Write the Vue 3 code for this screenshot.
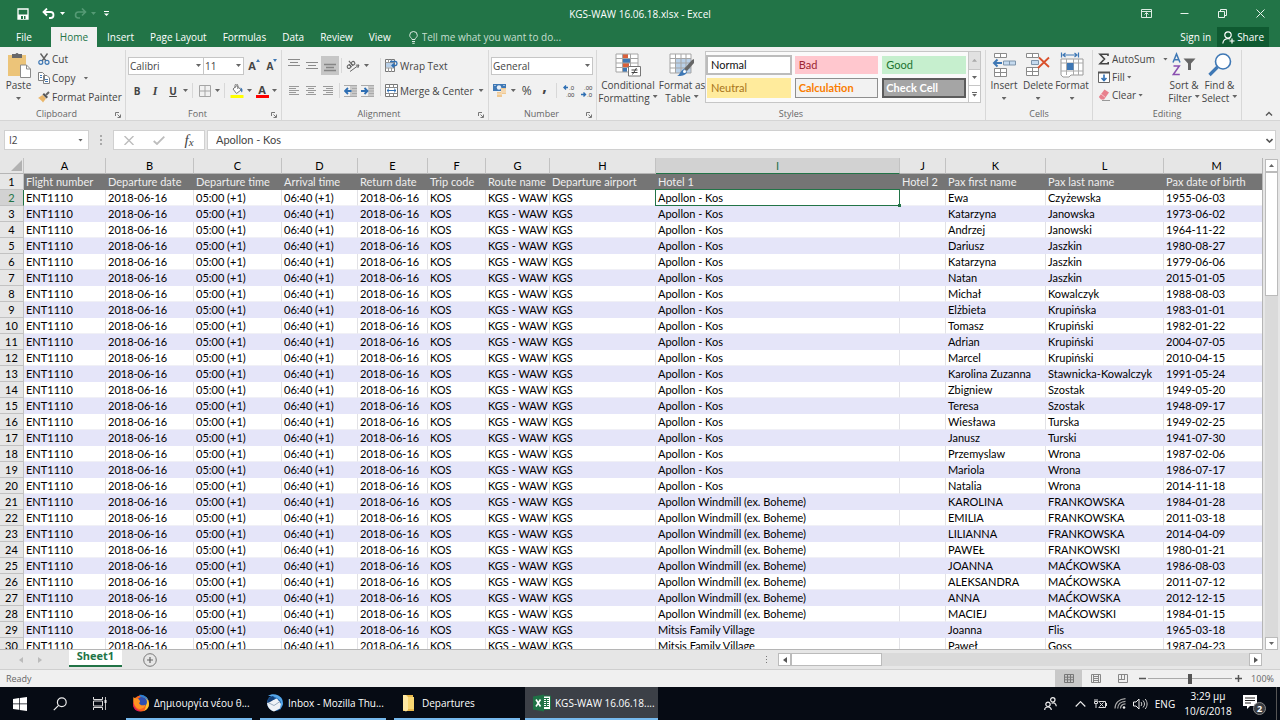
<script setup>
import { ref } from 'vue'

const tabs = ['Insert', 'Page Layout', 'Formulas', 'Data', 'Review', 'View']

const columns = [
  { id: 'A', width: 82, title: 'Flight number' },
  { id: 'B', width: 88, title: 'Departure date' },
  { id: 'C', width: 88, title: 'Departure time' },
  { id: 'D', width: 76, title: 'Arrival time' },
  { id: 'E', width: 70, title: 'Return date' },
  { id: 'F', width: 58, title: 'Trip code' },
  { id: 'G', width: 64, title: 'Route name' },
  { id: 'H', width: 106, title: 'Departure airport' },
  { id: 'I', width: 244, title: 'Hotel 1' },
  { id: 'J', width: 46, title: 'Hotel 2' },
  { id: 'K', width: 100, title: 'Pax first name' },
  { id: 'L', width: 118, title: 'Pax last name' },
  { id: 'M', width: 106, title: 'Pax date of birth' },
]

const KOS = 'Apollon - Kos'
const WINDMILL = 'Apollon Windmill (ex. Boheme)'
const MITSIS = 'Mitsis Family Village'

const passengers = [
  [KOS, 'Ewa', 'Czyżewska', '1955-06-03'],
  [KOS, 'Katarzyna', 'Janowska', '1973-06-02'],
  [KOS, 'Andrzej', 'Janowski', '1964-11-22'],
  [KOS, 'Dariusz', 'Jaszkin', '1980-08-27'],
  [KOS, 'Katarzyna', 'Jaszkin', '1979-06-06'],
  [KOS, 'Natan', 'Jaszkin', '2015-01-05'],
  [KOS, 'Michał', 'Kowalczyk', '1988-08-03'],
  [KOS, 'Elżbieta', 'Krupińska', '1983-01-01'],
  [KOS, 'Tomasz', 'Krupiński', '1982-01-22'],
  [KOS, 'Adrian', 'Krupiński', '2004-07-05'],
  [KOS, 'Marcel', 'Krupiński', '2010-04-15'],
  [KOS, 'Karolina Zuzanna', 'Stawnicka-Kowalczyk', '1991-05-24'],
  [KOS, 'Zbigniew', 'Szostak', '1949-05-20'],
  [KOS, 'Teresa', 'Szostak', '1948-09-17'],
  [KOS, 'Wiesława', 'Turska', '1949-02-25'],
  [KOS, 'Janusz', 'Turski', '1941-07-30'],
  [KOS, 'Przemyslaw', 'Wrona', '1987-02-06'],
  [KOS, 'Mariola', 'Wrona', '1986-07-17'],
  [KOS, 'Natalia', 'Wrona', '2014-11-18'],
  [WINDMILL, 'KAROLINA', 'FRANKOWSKA', '1984-01-28'],
  [WINDMILL, 'EMILIA', 'FRANKOWSKA', '2011-03-18'],
  [WINDMILL, 'LILIANNA', 'FRANKOWSKA', '2014-04-09'],
  [WINDMILL, 'PAWEŁ', 'FRANKOWSKI', '1980-01-21'],
  [WINDMILL, 'JOANNA', 'MAĆKOWSKA', '1986-08-03'],
  [WINDMILL, 'ALEKSANDRA', 'MAĆKOWSKA', '2011-07-12'],
  [WINDMILL, 'ANNA', 'MAĆKOWSKA', '2012-12-15'],
  [WINDMILL, 'MACIEJ', 'MAĆKOWSKI', '1984-01-15'],
  [MITSIS, 'Joanna', 'Flis', '1965-03-18'],
  [MITSIS, 'Paweł', 'Goss', '1987-04-23'],
]

const rows = passengers.map(([hotel, first, last, born]) => [
  'ENT1110', '2018-06-16', '05:00 (+1)', '06:40 (+1)', '2018-06-16',
  'KOS', 'KGS - WAW', 'KGS', hotel, '', first, last, born,
])

const nameBox = ref('I2')
const formula = ref(KOS)
const zoom = ref(50)
</script>

<template>
  <div class="screen">
    <header class="top">
      <div class="titlebar">
        <div class="quick">
          <button aria-label="Save"><svg width="12" height="12" viewBox="0 0 12 12"><path d="M1 1h10v10H1z" fill="none" stroke="#fff" stroke-width="1.3" /><path d="M1 6.500h10V11H1z" fill="#fff" /><path d="M4 8h2v3H4zM7 8h1.500v3H7z" fill="#227447" /></svg></button>
          <button class="undo" aria-label="Undo"><svg width="13" height="11" viewBox="0 0 13 11"><path d="M2 4h6.500a3 3 0 0 1 0 6H7" fill="none" stroke="#fff" stroke-width="1.800" /><path d="M5 .5L1.500 4 5 7.500" fill="none" stroke="#fff" stroke-width="1.800" /></svg></button>
          <i class="tri light"></i>
          <button class="redo" aria-label="Redo"><svg width="13" height="11" viewBox="0 0 13 11"><path d="M11 4H4.500a3 3 0 0 0 0 6H6M8 .5L11.500 4 8 7.500" fill="none" stroke="#559a75" stroke-width="1.600" /></svg></button>
          <i class="tri faint"></i>
          <button class="custom" aria-label="Customize Quick Access Toolbar"><svg width="5" height="6" viewBox="0 0 5 6"><path d="M0 .5h5" stroke="#fff" /><path d="M0 2.500h5L2.500 5z" fill="#fff" /></svg></button>
        </div>
        <h1>KGS-WAW 16.06.18.xlsx - Excel</h1>
        <div class="winbtns">
          <button aria-label="Ribbon Display Options"><svg width="11" height="9" viewBox="0 0 11 9"><path d="M.5.5h10v8H.5zM.5 2.500h10M5.500 8V4M3.500 5.500l2-2 2 2" fill="none" stroke="#dcebe2" /></svg></button>
          <button aria-label="Minimize"><svg width="9" height="9" viewBox="0 0 9 9"><path d="M.5 4.500h8" stroke="#e8f2ec" /></svg></button>
          <button aria-label="Restore"><svg width="9" height="9" viewBox="0 0 9 9"><path d="M.5 2.500h6v6h-6zM2.500 2.500v-2h6v6h-2" fill="none" stroke="#e8f2ec" /></svg></button>
          <button aria-label="Close"><svg width="9" height="9" viewBox="0 0 9 9"><path d="M.5.5l8 8M8.500.5l-8 8" stroke="#e8f2ec" /></svg></button>
        </div>
      </div>
      <nav class="tabs">
        <button class="file">File</button>
        <button class="active">Home</button>
        <button v-for="t in tabs" :key="t">{{ t }}</button>
        <label class="tell">
          <svg width="9" height="13" viewBox="0 0 9 13"><path d="M3 8.500C3 7 .7 6.500.7 4.300a3.800 3.800 0 0 1 7.600 0C8.300 6.500 6 7 6 8.500zM3 10.500h3M3.300 12.300h2.400" fill="none" stroke="#dcebe2" /></svg>
          <input type="text" aria-label="Tell me" placeholder="Tell me what you want to do..." />
        </label>
        <button class="signin">Sign in</button>
        <button class="share"><svg width="13" height="13" viewBox="0 0 13 13"><circle cx="6" cy="4" r="3.200" fill="none" stroke="#fff" stroke-width="1.200" /><path d="M.8 12.500c.4-3 2.200-4.800 5.200-5 1 0 1.600.2 2.200.5M10 7.500v5M7.500 10h5" fill="none" stroke="#fff" stroke-width="1.200" /></svg>Share</button>
      </nav>
    </header>

    <section class="ribbon" aria-label="Ribbon">
      <div class="group clipboard">
        <div class="body">
          <button class="big paste">
            <svg width="24" height="26" viewBox="0 0 24 26"><path d="M1 3h18v21H1z" fill="#ecc479" /><path d="M5 2h3.500a1.600 1.600 0 0 1 3 0H15v4H5z" fill="#68686a" /><path d="M13.500 13h6l4 4v8.500h-10z" fill="#fff" stroke="#8b8b8b" /><path d="M19.500 13v4h4" fill="none" stroke="#8b8b8b" /></svg>
            <span>Paste</span><i class="tri"></i>
          </button>
          <div class="stack">
            <button class="small"><svg width="12" height="12" viewBox="0 0 12 12"><path d="M2.500.5L8 8M9.500.5L4 8" stroke="#606060" stroke-width="1.400" /><circle cx="2.800" cy="9.300" r="2" fill="none" stroke="#3f78b5" stroke-width="1.200" /><circle cx="9" cy="9.300" r="2" fill="none" stroke="#3f78b5" stroke-width="1.200" /></svg>Cut</button>
            <button class="small"><svg width="12" height="12" viewBox="0 0 12 12"><path d="M.5.5h4l2 2v6h-6zM5.500 3.500h3.500l2.500 2.500v5.500h-6z" fill="#fff" stroke="#808080" /><path d="M2 3.500h2M2 5.500h2M7 7.500h3M7 9.500h3" stroke="#3f78b5" /></svg>Copy<i class="tri gap"></i></button>
            <button class="small"><svg width="12" height="12" viewBox="0 0 12 12"><path d="M4.500 4L8 7.500 5 11.500C3.500 9.500 2 8 0 7z" fill="#eab669" /><path d="M4.500 3.500L8.500 7.500 10 6 6 2z" fill="#555" /><path d="M8 4l3-3" stroke="#666" stroke-width="2" /></svg>Format Painter</button>
          </div>
        </div>
        <footer>Clipboard<svg class="launch" viewBox="0 0 6 6"><path d="M.5 4V.5H4M2.500 2.500L5 5M5.500 2.500v3h-3" fill="none" stroke="#777" /></svg></footer>
      </div>

      <div class="group font">
        <div class="body rows">
          <div class="line">
            <span class="combo face"><select aria-label="Font"><option>Calibri</option></select><i class="tri"></i></span>
            <span class="combo size"><select aria-label="Font size"><option>11</option></select><i class="tri"></i></span>
            <button class="tool grow" aria-label="Increase Font Size"><b>A</b><svg width="4" height="3" viewBox="0 0 4 3"><path d="M2 0l2 3H0z" fill="#3f78b5" /></svg></button>
            <button class="tool grow less" aria-label="Decrease Font Size"><b>A</b><svg width="4" height="3" viewBox="0 0 4 3"><path d="M0 0h4L2 3z" fill="#3f78b5" /></svg></button>
          </div>
          <div class="line">
            <button class="tool"><b>B</b></button>
            <button class="tool it"><b>I</b></button>
            <button class="tool un"><b>U</b></button>
            <i class="tri"></i><i class="vr"></i>
            <button class="tool" aria-label="Borders"><svg width="12" height="12" viewBox="0 0 12 12"><path d="M.5.5h11v11H.5zM6 .5v11M.5 6h11" fill="none" stroke="#a5a5a5" /></svg></button>
            <i class="tri"></i><i class="vr"></i>
            <button class="tool" aria-label="Fill Color"><svg width="14" height="14" viewBox="0 0 14 14"><path d="M3 5l4-3.500L11 6 6.500 9.500z" fill="#fff" stroke="#777" /><path d="M5 4V1.500a1.400 1.400 0 0 1 2.800 0V5" fill="none" stroke="#777" /><path d="M10.500 3.500c2 .5 2.500 2.500 1.500 5-1-.5-1.500-2-1.500-5z" fill="#3f78b5" /><path d="M.5 11h13v3H.5z" fill="#ff0" /></svg></button>
            <i class="tri"></i>
            <button class="tool color" aria-label="Font Color"><b>A</b></button>
            <i class="tri"></i>
          </div>
        </div>
        <footer>Font<svg class="launch" viewBox="0 0 6 6"><path d="M.5 4V.5H4M2.500 2.500L5 5M5.500 2.500v3h-3" fill="none" stroke="#777" /></svg></footer>
      </div>

      <div class="group align">
        <div class="body">
          <div class="rows">
            <div class="line">
              <button class="tool" aria-label="Top Align"><svg class="lift" width="12" height="12" viewBox="0 0 12 12"><path d="M0 1.500h12M2 4.500h8M0 7.500h12" stroke="#8a8a8a" /></svg></button>
              <button class="tool" aria-label="Middle Align"><svg width="12" height="12" viewBox="0 0 12 12"><path d="M0 2.500h12M2 5.500h8M0 8.500h12" stroke="#8a8a8a" /></svg></button>
              <button class="tool pressed" aria-label="Bottom Align"><svg width="12" height="12" viewBox="0 0 12 12"><path d="M0 4.500h12M2 7.500h8M0 10.500h12" stroke="#858585" stroke-width="1.500" /></svg></button>
              <i class="vr"></i>
              <button class="tool" aria-label="Orientation"><svg width="14" height="13" viewBox="0 0 14 13"><path d="M4 12.500l9-6.500M13 6l-3.200.2M13 6l-1.200 3" fill="none" stroke="#666" /><g transform="rotate(-40 5 6)" fill="none" stroke="#666" stroke-width="1.100"><circle cx="2.300" cy="6" r="1.700" /><path d="M4.200 4v4M6 1.500V8" /><circle cx="7.800" cy="6" r="1.700" /></g></svg></button>
              <i class="tri"></i>
            </div>
            <div class="line">
              <button class="tool" aria-label="Align Left"><svg width="10" height="9" viewBox="0 0 10 9"><path d="M0 .5h10M0 2.500h7M0 4.500h10M0 6.500h7M0 8.500h10" stroke="#9a9a9a" /></svg></button>
              <button class="tool" aria-label="Center"><svg width="10" height="9" viewBox="0 0 10 9"><path d="M0 .5h10M2 2.500h6M0 4.500h10M2 6.500h6M0 8.500h10" stroke="#9a9a9a" /></svg></button>
              <button class="tool" aria-label="Align Right"><svg width="10" height="9" viewBox="0 0 10 9"><path d="M0 .5h10M3 2.500h7M0 4.500h10M3 6.500h7M0 8.500h10" stroke="#9a9a9a" /></svg></button>
              <i class="vr"></i>
              <button class="tool" aria-label="Decrease Indent"><svg width="13" height="12" viewBox="0 0 13 12"><path d="M6 .5h7v11H6z" fill="#c9c9c9" /><path d="M0 .5h13M0 11.500h13M8 3.500h5M8 6h5M8 8.500h5" stroke="#aaa" /><path d="M7.500 6H1.500M4 3L1 6l3 3" fill="none" stroke="#2f6fb3" stroke-width="1.800" /></svg></button>
              <button class="tool" aria-label="Increase Indent"><svg width="13" height="12" viewBox="0 0 13 12"><path d="M7 .5h6v11H7z" fill="#c9c9c9" /><path d="M0 .5h13M0 11.500h13M8 3.500h5M8 6h5M8 8.500h5" stroke="#aaa" /><path d="M0 6h6M3.500 3l3 3-3 3" fill="none" stroke="#2f6fb3" stroke-width="1.800" /></svg></button>
            </div>
          </div>
          <i class="vr tall"></i>
          <div class="rows">
            <button class="small"><svg width="13" height="13" viewBox="0 0 13 13"><path d="M.5.5h9v12h-9z" fill="#fff" stroke="#777" /><path d="M1 4h8v4.500H1z" fill="#b9d0e8" /><path d="M3.500.5v3M6.500.5v3M3.500 9v4M6.500 9v4M.5 3.500h9M.5 9h9" stroke="#999" /><path d="M5 2.500h5.500c2 0 2 4 0 4H7M9 4.500l-2 2 2 2" fill="none" stroke="#2f6fb3" stroke-width="1.300" /></svg>Wrap Text</button>
            <button class="small"><svg width="13" height="13" viewBox="0 0 13 13"><path d="M.5.5h12v12H.5z" fill="#fff" stroke="#777" /><path d="M.5 3.500h12M.5 9.500h12M4.500.5v3M8.500.5v3M4.500 9.500v3M8.500 9.500v3" stroke="#888" /><path d="M2 6.500h9M4 4.700L2 6.500l2 1.800M9 4.700l2 1.800-2 1.800" fill="none" stroke="#2f6fb3" /></svg>Merge &amp; Center<i class="tri near"></i></button>
          </div>
        </div>
        <footer>Alignment<svg class="launch" viewBox="0 0 6 6"><path d="M.5 4V.5H4M2.500 2.500L5 5M5.500 2.500v3h-3" fill="none" stroke="#777" /></svg></footer>
      </div>

      <div class="group number">
        <div class="body rows">
          <div class="line"><span class="combo format"><select aria-label="Number Format"><option>General</option></select><i class="tri"></i></span></div>
          <div class="line">
            <button class="tool" aria-label="Accounting Number Format"><svg width="13" height="13" viewBox="0 0 13 13"><path d="M0 0h13v7H0z" fill="#3f78b5" /><circle cx="6" cy="3.500" r="2.200" fill="#e9f0f8" /><path d="M1.500 1.500h1M10.500 1.500h1" stroke="#fff" /><path d="M8 4h5v6H8zM4 8h5v5H4z" fill="#f0c890" /><path d="M8 6h5M8 8h5M4 10h5" stroke="#fff" stroke-width=".6" /></svg></button>
            <i class="tri"></i>
            <button class="tool sign">%</button>
            <button class="tool comma">,</button>
            <i class="vr"></i>
            <button class="tool" aria-label="Increase Decimal"><svg class="dec" width="12" height="14" viewBox="0 0 12 14"><text x="6" y="6">.0</text><text x="3" y="13">.00</text><path d="M5 3.500H1M3 1.500l-2 2 2 2" fill="none" stroke="#2f6fb3" stroke-width="1.400" /></svg></button>
            <button class="tool" aria-label="Decrease Decimal"><svg class="dec" width="12" height="14" viewBox="0 0 12 14"><text x="3" y="6">.00</text><text x="6" y="13">.0</text><path d="M0 10.500h4M2.500 8.500l2 2-2 2" fill="none" stroke="#2f6fb3" stroke-width="1.400" /></svg></button>
          </div>
        </div>
        <footer>Number<svg class="launch" viewBox="0 0 6 6"><path d="M.5 4V.5H4M2.500 2.500L5 5M5.500 2.500v3h-3" fill="none" stroke="#777" /></svg></footer>
      </div>

      <div class="group styles">
        <div class="body">
          <button class="big cond">
            <svg width="26" height="24" viewBox="0 0 26 24"><path d="M1 1h22v18H1z" fill="#fff" /><path d="M8 1h5v4H8zM8 10h6v4H8z" fill="#d9603b" /><path d="M8 5h8v5H8zM8 14h4v5H8z" fill="#3f78b5" /><path d="M1 1h22v18H1zM1 5.500h22M1 10h22M1 14.500h22M7.500 1v18M15.500 1v18" fill="none" stroke="#a5a5a5" /><path d="M13.500 13.500h12v9.500h-12z" fill="#fff" stroke="#777" /><path d="M16.500 17h6M16.500 19.500h6M21.500 15l-4 6.500" stroke="#444" /></svg>
            <span>Conditional<br />Formatting<i class="tri"></i></span>
          </button>
          <button class="big fat">
            <svg width="26" height="24" viewBox="0 0 26 24"><path d="M1 1h21v19H1z" fill="#fff" /><path d="M6.500 5.500H22V20H6.500z" fill="#b9d0e8" /><path d="M1 1h21v19H1zM1 5.500h21M1 10h21M1 15h21M6.500 1v19M12 1v19M17 1v19" fill="none" stroke="#a5a5a5" /><path d="M25 6v4l-7 8-3-2 8-9z" fill="#666" /><path d="M15 16l3 3c-1 3-5 4.500-10 4 3-1 3-5 7-7z" fill="#3f78b5" /><circle cx="15.500" cy="18.500" r="1.500" fill="#fff" /></svg>
            <span>Format as<br />Table<i class="tri"></i></span>
          </button>
          <div class="gallery">
            <div class="swatches">
              <button class="normal">Normal</button><button class="bad">Bad</button><button class="good">Good</button>
              <button class="neutral">Neutral</button><button class="calc">Calculation</button><button class="check">Check Cell</button>
            </div>
            <div class="spin">
              <button class="off" aria-label="Previous styles"><i class="tri up"></i></button>
              <button aria-label="Next styles"><i class="tri"></i></button>
              <button class="more" aria-label="More styles"><i class="tri"></i></button>
            </div>
          </div>
        </div>
        <footer>Styles</footer>
      </div>

      <div class="group cells">
        <div class="body">
          <button class="big"><svg width="24" height="24" viewBox="0 0 24 24"><path d="M2.500.5h12v4h-12zM8.500.5v4M2.500 15.500h12v8h-12zM2.500 19.500h12M8.500 15.500v8" fill="#fff" stroke="#8a8a8a" /><path d="M11.500 8h12v4h-12zM17.500 8v4" fill="#c5daef" stroke="#7f95ab" /><path d="M10 10H2M5.500 6.500L2 10l3.500 3.500" fill="none" stroke="#3f78b5" stroke-width="2" /></svg><span>Insert</span><i class="tri"></i></button>
          <button class="big"><svg width="24" height="24" viewBox="0 0 24 24"><path d="M.5.5h12v4H.5zM6.500.5v4M.5 14.500h12v8H.5zM.5 18.500h12M6.500 14.500v8" fill="#fff" stroke="#8a8a8a" /><path d="M5.500 7.500h7v4h-7z" fill="#c5daef" stroke="#7f95ab" /><path d="M13 4.500L23 14M23 4.500L12 15" stroke="#d9502b" stroke-width="1.800" /></svg><span>Delete</span><i class="tri"></i></button>
          <button class="big"><svg width="24" height="25" viewBox="0 0 24 25"><path d="M1.500 0v5M18.500 0v5M3 2.500h14M5.500.5l-2.500 2 2.500 2M14.500.5l2.500 2-2.500 2" fill="none" stroke="#3f78b5" stroke-width="1.200" /><path d="M1 6.500h22v16H11l-2 2H3l-2-2z" fill="#fff" stroke="#9a9a9a" /><path d="M1 10.500h22M1 18.500h22M6.500 6.500v16M13.500 6.500v16M18.500 6.500v16" stroke="#aaa" /><path d="M7 10.500h6.500v7H7z" fill="#3f78b5" /></svg><span>Format</span><i class="tri"></i></button>
        </div>
        <footer>Cells</footer>
      </div>

      <div class="group editing">
        <div class="body">
          <div class="stack">
            <button class="small"><svg width="12" height="12" viewBox="0 0 12 12"><path d="M10 3V1.200H2L6.500 6 2 10.800h8.200V9" fill="none" stroke="#444" stroke-width="1.600" /></svg>AutoSum<i class="tri gap"></i></button>
            <button class="small"><svg width="12" height="12" viewBox="0 0 12 12"><path d="M.5 1.500h11v10H.5z" fill="#fff" stroke="#666" /><path d="M0 1.500h12" stroke="#555" stroke-width="2" /><path d="M6 3.500V9M3.500 7L6 9.500 8.500 7" fill="none" stroke="#2f6fb3" stroke-width="1.600" /></svg>Fill<i class="tri"></i></button>
            <button class="small"><svg width="12" height="12" viewBox="0 0 12 12"><path d="M6.500.5l4.500 3L6 10.500H3L.8 8z" fill="#e8808d" /><path d="M3 5l4.500 3.500" stroke="#f6c3ca" /><path d="M4 11.500h8" stroke="#999" /></svg>Clear<i class="tri"></i></button>
          </div>
          <button class="big sort"><svg width="24" height="24" viewBox="0 0 24 24"><path d="M1 9.500L4.500 1 8 9.500M2.200 6.800h4.600" fill="none" stroke="#3f78b5" stroke-width="1.500" /><path d="M1.500 13h5.800l-6 8.500h6.500" fill="none" stroke="#8a4fb0" stroke-width="1.500" /><path d="M11.500 5.500h12l-4.500 5V17h-3v-6.500z" fill="#666" /></svg><span>Sort &amp;<br />Filter<i class="tri"></i></span></button>
          <button class="big find"><svg width="24" height="24" viewBox="0 0 24 24"><path d="M9.500 14L1.500 22" stroke="#3f78b5" stroke-width="3.200" /><circle cx="15" cy="8.500" r="7.500" fill="#fff" stroke="#3f78b5" stroke-width="1.600" /></svg><span>Find &amp;<br />Select<i class="tri"></i></span></button>
        </div>
        <footer>Editing</footer>
      </div>
      <button class="collapse" aria-label="Collapse the Ribbon"><svg width="8" height="5" viewBox="0 0 8 5"><path d="M1 4.500l3-3 3 3" fill="none" stroke="#555" stroke-width="1.400" /></svg></button>
    </section>

    <section class="formulabar">
      <span class="namebox"><input v-model="nameBox" type="text" aria-label="Name Box" /><i class="tri"></i></span>
      <svg class="dots" width="2" height="10" viewBox="0 0 2 10"><path d="M0 0h2v2H0zM0 4h2v2H0zM0 8h2v2H0z" fill="#aaa" /></svg>
      <div class="fx">
        <button aria-label="Cancel"><svg width="10" height="9" viewBox="0 0 10 9"><path d="M.5 0l9 9M9.500 0l-9 9" stroke="#bdbdbd" stroke-width="1.400" /></svg></button>
        <button aria-label="Enter"><svg width="12" height="9" viewBox="0 0 12 9"><path d="M.7 5l3.300 3L11.300.7" fill="none" stroke="#bdbdbd" stroke-width="1.800" /></svg></button>
        <button class="fn" aria-label="Insert Function">f<small>x</small></button>
      </div>
      <span class="formula"><input v-model="formula" type="text" aria-label="Formula" /><svg width="7" height="5" viewBox="0 0 7 5"><path d="M.5 1l3 3 3-3" fill="none" stroke="#555" stroke-width="1.600" /></svg></span>
    </section>

    <main class="sheet">
      <div class="viewport">
        <table>
          <colgroup>
            <col class="rowhead" />
            <col v-for="c in columns" :key="c.id" :style="{ width: c.width + 'px' }" />
          </colgroup>
          <thead>
            <tr>
              <th class="corner"><svg width="11" height="11" viewBox="0 0 11 11"><path d="M11 0v11H0z" fill="#b2b2b2" /></svg></th>
              <th v-for="c in columns" :key="c.id" :class="{ on: c.id === 'I' }">{{ c.id }}</th>
            </tr>
          </thead>
          <tbody>
            <tr class="titles">
              <th>1</th>
              <td v-for="c in columns" :key="c.id">{{ c.title }}</td>
            </tr>
            <tr v-for="(row, r) in rows" :key="r" :class="{ odd: r % 2 === 1 }">
              <th :class="{ on: r === 0 }">{{ r + 2 }}</th>
              <td v-for="(cell, c) in row" :key="c" :class="{ picked: r === 0 && c === 8 }">{{ cell }}</td>
            </tr>
          </tbody>
        </table>
      </div>
      <div class="vscroll">
        <button aria-label="Scroll up"><i class="tri up"></i></button>
        <div class="vthumb"></div>
        <div class="track"></div>
        <button aria-label="Scroll down"><i class="tri"></i></button>
      </div>
    </main>

    <div class="sheetbar">
      <button class="nav" aria-label="Previous sheet"><svg width="4" height="6" viewBox="0 0 4 6"><path d="M4 0v6L0 3z" fill="#bbb" /></svg></button>
      <button class="nav" aria-label="Next sheet"><svg width="4" height="6" viewBox="0 0 4 6"><path d="M0 0v6l4-3z" fill="#bbb" /></svg></button>
      <button class="sheettab">Sheet1</button>
      <button class="add" aria-label="New sheet"><svg width="14" height="14" viewBox="0 0 14 14"><circle cx="7" cy="7" r="6.300" fill="none" stroke="#777" /><path d="M7 4v6M4 7h6" stroke="#666" stroke-width="1.200" /></svg></button>
      <svg class="grip" width="2" height="8" viewBox="0 0 2 8"><path d="M0 0h1v1H0zM0 3h1v1H0zM0 6h1v1H0z" fill="#777" /></svg>
      <div class="hscroll">
        <button aria-label="Scroll left"><svg width="4" height="6" viewBox="0 0 4 6"><path d="M4 0v6L0 3z" fill="#555" /></svg></button>
        <div class="hthumb"></div>
        <div class="track"></div>
        <button aria-label="Scroll right"><svg width="4" height="6" viewBox="0 0 4 6"><path d="M0 0v6l4-3z" fill="#555" /></svg></button>
      </div>
    </div>

    <footer class="status">
      <span class="ready">Ready</span>
      <button class="view on" aria-label="Normal view"><svg width="10" height="9" viewBox="0 0 10 9"><path d="M.5.5h9v8h-9zM.5 3.200h9M.5 5.800h9M3.500.5v8M6.500.5v8" fill="none" stroke="#777" /></svg></button>
      <button class="view" aria-label="Page Layout view"><svg width="10" height="9" viewBox="0 0 10 9"><path d="M.5.5h9v8h-9zM3 2.500h4M3 4.500h4M3 6.500h4M2.500.5v8M7.500.5v8" fill="none" stroke="#888" /></svg></button>
      <button class="view" aria-label="Page Break Preview"><svg width="10" height="9" viewBox="0 0 10 9"><path d="M.5.5h9v8h-9zM3.500.5v5M6.500.5v5M0 5.500h7" fill="none" stroke="#888" /></svg></button>
      <button class="step" aria-label="Zoom out"><svg width="7" height="7" viewBox="0 0 7 7"><path d="M0 3.500h7" stroke="#555" stroke-width="1.500" /></svg></button>
      <input v-model="zoom" class="zoom" type="range" min="0" max="100" aria-label="Zoom" />
      <button class="step" aria-label="Zoom in"><svg width="7" height="7" viewBox="0 0 7 7"><path d="M0 3.500h7M3.500 0v7" stroke="#555" stroke-width="1.500" /></svg></button>
      <span class="pct">100%</span>
    </footer>

    <div class="taskbar">
      <button class="sys" aria-label="Start"><svg width="14" height="14" viewBox="0 0 14 14"><path d="M0 2l6-.9v5.500H0zM6.700 1L14 0v6.600H6.700zM0 7.300h6v5.500L0 12zM6.700 7.300H14V14l-7.300-1z" fill="#fff" /></svg></button>
      <button class="sys" aria-label="Search"><svg width="14" height="14" viewBox="0 0 14 14"><circle cx="8.800" cy="5.200" r="4.400" fill="none" stroke="#eee" stroke-width="1.200" /><path d="M5.600 8.400L.8 13.200" stroke="#eee" stroke-width="1.200" /></svg></button>
      <button class="sys" aria-label="Task View"><svg width="14" height="13" viewBox="0 0 14 13"><path d="M.5 0v2.500h9V0M.5 13v-2.500h9V13M.5 4h9v5h-9z" fill="none" stroke="#ddd" /><path d="M12.500 0v13" stroke="#bbb" /><path d="M11.500 3h2v3h-2z" fill="#eee" /></svg></button>
      <button class="app firefox">
        <svg width="18" height="18" viewBox="0 0 18 18"><circle cx="9" cy="9.500" r="8" fill="#f7641e" /><path d="M9 1.500a8 8 0 0 1 8 8c0 4-2 6-5 7.500 3-4 2.500-9-3-15.500z" fill="#ffc42e" /><circle cx="10" cy="8" r="5" fill="#2d4fb0" /><path d="M7 1c4-1.500 9 2 9.500 6-1.500-2-3-3-5-3.500C9 3 8 2.500 7 1z" fill="#2b7fd6" /><path d="M1.500 3c1 1 2.500 1.500 4 1.500C8 6 9 8 7 9c1 2.500 4 3 6.500 1.500C13 14.500 8 16 5 14 2.500 12 .5 7 1.500 3z" fill="#ff9322" /><path d="M1.200 8c.5 5 3.800 8.500 8.300 9C5 18.500 0 15 1.200 8z" fill="#e31a57" /></svg>
        <span>Δημιουργία νέου θ...</span>
      </button>
      <button class="app">
        <svg width="18" height="18" viewBox="0 0 18 18"><circle cx="9" cy="9" r="8" fill="#2266ad" /><path d="M2 2c4-3 11-2 14 3l1 5-3 6 1-8C13 4 8 2 2 2z" fill="#55a6e8" /><path d="M1 8l10-3.500 4 5.500-1 4.500-6 3C4 16.500 1 13 1 8z" fill="#eef2f6" /><path d="M1 8l7 3.500 6-4" fill="none" stroke="#9badbf" /><path d="M7 2c-3 1-6 4-6 7l3-1 5-3z" fill="#123f78" /></svg>
        <span>Inbox - Mozilla Thu...</span>
      </button>
      <button class="app">
        <svg width="18" height="18" viewBox="0 0 18 18"><path d="M3 1h10v13h1v3H3z" fill="#e8b84b" /><path d="M3 1h3l2 2v13l-2 1.500L3 16z" fill="#ffe9a2" /><path d="M8 3h6v12H8z" fill="#f9d772" /></svg>
        <span>Departures</span>
      </button>
      <button class="app current">
        <svg width="18" height="18" viewBox="0 0 18 18"><path d="M9 2h8.500v13.500H9z" fill="#fff" stroke="#1f7246" /><path d="M11 4.500h5M11 6.500h5M11 8.500h5M11 10.500h5M11 12.500h5M13.500 4v9" stroke="#1f7246" /><path d="M0 2.500L11 .5v17L0 15.500z" fill="#1f7246" /><path d="M3 5.500l4.500 7M7.500 5.500L3 12.500" stroke="#fff" stroke-width="1.600" /></svg>
        <span>KGS-WAW 16.06.18....</span>
      </button>
      <div class="tray">
        <button class="people" aria-label="People"><svg width="13" height="14" viewBox="0 0 13 14"><circle cx="8.800" cy="2.800" r="2.200" fill="none" stroke="#eee" stroke-width="1.200" /><circle cx="4" cy="7.300" r="2.200" fill="none" stroke="#eee" stroke-width="1.200" /><path d="M.7 13c0-4 6.600-4 6.600 0M7.500 6.300c2.500-1.200 4.500 0 4.800 3" fill="none" stroke="#eee" stroke-width="1.200" /></svg></button>
        <button aria-label="Show hidden icons"><svg width="11" height="6" viewBox="0 0 11 6"><path d="M.7 5.500l4.800-4.800 4.800 4.800" fill="none" stroke="#eee" stroke-width="1.200" /></svg></button>
        <button aria-label="Battery"><svg width="13" height="10" viewBox="0 0 13 10"><path d="M4.500 2.500h7v6h-7M12.500 4v3M5.500 3.500l4 4M9.500 3.500l-4 4" fill="none" stroke="#ddd" /><path d="M1 0v2M3 0v2M.5 2.500h3v2h-3zM2 4.500V9" fill="none" stroke="#ddd" /></svg></button>
        <button aria-label="Network"><svg width="12" height="11" viewBox="0 0 12 11"><path d="M1 10.500C1 5 5 1 11.500.7M3.700 10.500c0-4 3-7 7.800-7.200M6.500 10.500c0-2.500 2-4.500 5-4.700" fill="none" stroke="#aaa" stroke-width="1.200" /><circle cx="10" cy="9.500" r="1.300" fill="#eee" /></svg></button>
        <button aria-label="Volume"><svg width="15" height="12" viewBox="0 0 15 12"><path d="M.5 4v4H3l3 3V1L3 4z" fill="none" stroke="#eee" /><path d="M8 4c1 1.200 1 2.800 0 4M10 2.500c2 2 2 5 0 7M12.200 1c2.500 3 2.500 7 0 10" fill="none" stroke="#ccc" /></svg></button>
        <button class="lang">ENG</button>
        <button class="clock">3:29 μμ<br />10/6/2018</button>
        <button class="note" aria-label="2 new notifications"><svg width="22" height="22" viewBox="0 0 22 22"><path d="M1 2h14v11H8l-3 3v-3H1z" fill="#fff" /><path d="M3 5h10M3 7.500h10M3 10h6" stroke="#222" /></svg><b>2</b></button>
      </div>
    </div>
  </div>
</template>

<style>
html, body { margin: 0; background: #e6e6e6; }
</style>

<style scoped>
.screen { display: flex; flex-direction: column; height: 100vh; overflow: hidden; font-family: "Open Sans", "Noto Sans", sans-serif; font-size: 10px; line-height: 14px; color: #444; }
button, input, select { font: inherit; color: inherit; border: 0; padding: 0; margin: 0; background: none; border-radius: 0; outline: 0; }
button { display: flex; align-items: center; justify-content: center; white-space: nowrap; }
svg { flex: none; display: block; }
h1 { margin: 0; font: inherit; }
.tri { flex: none; width: 5px; height: 3px; background: #666; clip-path: polygon(0 0, 100% 0, 50% 100%); }
.tri.up { clip-path: polygon(50% 0, 100% 100%, 0 100%); }
.tri.light { background: #fff; }
.tri.faint { background: #559a75; }

.top { background: #227447; color: #fff; flex: none; }
.titlebar { display: grid; grid-template-columns: 1fr auto 1fr; height: 27px; align-items: center; }
.quick { display: flex; align-items: center; padding-left: 17px; }
.undo { margin: 0 5px 0 13px; }
.redo { margin: 0 4px 0 9px; }
.custom { margin-left: 8px; }
.winbtns { display: flex; justify-content: flex-end; padding-right: 1px; }
.winbtns button { width: 38px; height: 26px; }
.tabs { display: flex; height: 20px; }
.tabs button { padding: 0 8px; }
.tabs .file { width: 51px; padding: 0 3px 0 0; }
.tabs .active { background: #f1f1f1; color: #227447; width: 46px; margin-right: 2px; }
.tell { display: flex; align-items: center; gap: 4px; flex: 1; padding-left: 10px; }
.tell input { flex: 1; }
.tell input::placeholder { color: #c5dfd0; opacity: 1; }
.tabs .signin { padding: 0 6px 0 8px; }
.tabs .share { background: #0f5a31; gap: 2px; padding: 0 5px; margin-right: 11px; }

.ribbon { display: flex; flex: none; height: 74px; background: #f1f1f1; border-bottom: 1px solid #d5d5d5; box-sizing: border-box; padding-top: 3px; }
.group { display: flex; flex-direction: column; box-sizing: border-box; height: 70px; border-right: 1px solid #d8d8d8; flex: none; position: relative; }
.group footer { text-align: center; color: #666; font-size: 9px; line-height: 12px; }
.launch { position: absolute; right: 4px; bottom: 2px; width: 6px; height: 6px; }
.body { display: flex; flex: 1; }
.rows { display: flex; flex-direction: column; gap: 6px; padding-top: 6px; box-sizing: border-box; }
.line { display: flex; align-items: center; height: 19px; }
.vr { width: 1px; height: 15px; background: #d8d8d8; margin: 0 2px; }
.vr.tall { height: 38px; margin: 8px 4px 0; }
.tool { width: 18px; height: 19px; }
.tool + .tri { margin: 0 2px; }
.small { gap: 2px; height: 19px; justify-content: flex-start; }
.small .gap { margin-left: 6px; }
.small .near { margin-left: 3px; }
.big { flex-direction: column; justify-content: flex-start; line-height: 13px; }
.big svg { height: 26px; margin: 2px 0 1px; }
.big > .tri { margin-top: 5px; }
.big span .tri { display: inline-block; margin: 0 0 4px 3px; }
.stack { display: flex; flex-direction: column; }
.stack .small { height: 18px; }

.clipboard { width: 126px; }
.clipboard .stack { padding: 0 0 0 1px; gap: 1px; }
.paste { width: 37px; }
.clipboard footer { padding-right: 12px; }
.combo { display: flex; align-items: center; background: #fff; border: 1px solid #c6c6c6; box-sizing: border-box; height: 18px; padding-right: 2px; }
.combo select { appearance: none; flex: 1; min-width: 0; padding-left: 1px; }
.font { width: 156px; }
.font .rows { padding-left: 2px; }
.font .tool + .tri { margin: 0 1px; }
.font .vr { margin: 0 3px; }
.face { width: 76px; }
.size { width: 40px; border-left: 0; }
.format { width: 102px; }
.grow { align-items: flex-start; margin-left: 1px; padding-top: 3px; box-sizing: border-box; font-size: 11px; }
.grow.less { font-size: 10px; margin-left: 0; }
.it { font-family: "Liberation Serif", serif; font-style: italic; font-size: 12px; }
.un b { text-decoration: underline; }
.color b { border-bottom: 3px solid #f00; width: 13px; line-height: 11px; font-size: 11px; }
.font footer { padding-right: 12px; }
.align { width: 207px; }
.align .body > .rows:first-child { padding-left: 3px; width: 94px; }
.align footer { padding-right: 12px; }
.pressed { background: #c6c6c6; }
.lift { margin-bottom: 4px; }
.number { width: 108px; }
.number .rows { padding-left: 2px; }
.number .vr { margin: 0 3px; }
.number footer { padding-right: 2px; }
.sign { font-size: 12px; }
.comma { font-size: 16px; font-weight: 700; align-items: flex-start; line-height: 10px; }
.dec { font-family: "Liberation Sans", sans-serif; font-size: 6px; fill: #444; }

.styles { width: 389px; }
.cond { width: 62px; }
.fat { width: 46px; }
.gallery { display: flex; border: 1px solid #c6c6c6; height: 52px; box-sizing: border-box; margin-top: 1px; width: 276px; }
.swatches { flex: 1; display: grid; grid-template-columns: repeat(3, 1fr); gap: 4px; padding: 4px 2px 4px 1px; background: #fafafa; }
.swatches button { justify-content: flex-start; padding-left: 3px; font-family: Lato, sans-serif; font-size: 11px; border: 1px solid transparent; }
.swatches .normal { background: #fff; color: #111; border-color: #bcbcbc; outline: 1px solid #bcbcbc; }
.bad { background: #ffc7ce; color: #9c2633; }
.good { background: #c6efce; color: #1c7430; }
.neutral { background: #ffeb9c; color: #a8741a; }
.swatches .calc { background: #f2f2f2; color: #fa7d00; border-color: #8f8f8f; font-weight: 700; }
.swatches .check { background: #a5a5a5; color: #fff; border: 2px solid #5c5c5c; font-weight: 700; padding-left: 2px; }
.spin { width: 11px; display: grid; grid-template-rows: 1fr 1fr 1fr; border-left: 1px solid #c6c6c6; background: #fff; }
.spin button + button { border-top: 1px solid #c6c6c6; }
.off { background: #e1e1e1; }
.off .tri { background: #aaa; }
.more { flex-direction: column; gap: 1px; }
.more::before { content: ""; width: 5px; height: 1px; background: #666; }
.cells { width: 107px; }
.cells .body { padding-left: 1px; }
.cells .big { width: 34px; }
.editing { width: 149px; }
.editing .stack { width: 73px; padding: 0 0 0 5px; box-sizing: border-box; }
.editing .sort { width: 36px; }
.editing .find { width: 35px; }
.collapse { margin: auto 7px 4px auto; }

.formulabar { display: flex; flex: none; height: 37px; box-sizing: border-box; padding: 9px 4px 8px; align-items: stretch; }
.namebox, .fx, .formula { background: #fff; border: 1px solid #d0d0d0; display: flex; align-items: center; box-sizing: border-box; }
.namebox { width: 85px; padding: 0 5px 0 4px; }
.namebox input { flex: 1; min-width: 0; }
.dots { align-self: center; margin: 0 11px; }
.fx { width: 92px; }
.fx button { flex: 1; }
.fx .fn { font-family: "Liberation Serif", serif; font-style: italic; font-size: 15px; color: #444; }
.fn small { font-size: 11px; margin-top: 4px; }
.formula { flex: 1; margin-left: 2px; padding: 0 2px 0 8px; }
.formula input { flex: 1; font-size: 11px; font-family: Lato, sans-serif; }

.sheet { flex: 1; min-height: 0; display: flex; }
.viewport { flex: 1; min-width: 0; overflow: hidden; border-right: 1px solid #b5b5b5; border-bottom: 1px solid #b5b5b5; }
table { table-layout: fixed; border-collapse: separate; border-spacing: 0; width: 1270px; font-family: Lato, sans-serif; font-size: 11px; line-height: 15px; color: #000; }
.rowhead { width: 24px; }
th, td { box-sizing: border-box; height: 16px; padding: 0; border-right: 1px solid #e2e2e6; border-bottom: 1px solid transparent; white-space: nowrap; font-weight: 400; }
td { padding-left: 2px; text-align: left; background: #fff; border-bottom-color: #f0f0f6; }
th { background: #e6e6e6; border-right-color: #c2c2c2; }
tbody th { border-bottom-color: #c2c2c2; }
thead th { border-bottom-color: #b5b5b5; }
.corner svg { margin-left: 11px; }
thead .on { background: #d2d2d2; color: #227447; border-bottom-color: #227447; }
tbody .on { background: #d2d2d2; color: #227447; border-right-color: #227447; }
.titles td { background: #757575; color: #eee; border-color: #757575; }
.odd td { background: #e5e5f9; border-color: #e5e5f9; }
.picked { position: relative; }
.picked::after { content: ""; position: absolute; inset: -1px -1px -1px -1px; border: 1px solid #227447; }
.picked::before { content: ""; position: absolute; right: -2px; bottom: -2px; width: 3px; height: 3px; background: #227447; }
.vscroll { width: 17px; box-sizing: border-box; padding: 1px 2px 0; display: flex; flex-direction: column; }
.vscroll button, .vthumb, .hscroll button, .hthumb { background: #fff; border: 1px solid #bbb; box-sizing: border-box; }
.vscroll button { height: 13px; }
.vthumb { height: 124px; }
.track { flex: 1; background: #dadada; }

.sheetbar { flex: none; display: flex; height: 20px; padding: 0 18px 0 19px; border-bottom: 1px solid #cfcfcf; box-sizing: border-box; align-items: center; }
.nav { margin-right: 15px; }
.sheettab { background: #fff; border-bottom: 2px solid #227447; width: 53px; height: 17px; align-self: flex-start; margin-left: 12px; color: #227447; font-weight: 700; font-size: 11px; line-height: 12px; align-items: flex-start; }
.add { margin-left: 21px; }
.grip { margin-left: auto; }
.hscroll { display: flex; width: 484px; height: 13px; margin-left: 10px; }
.hscroll button { width: 13px; }
.hthumb { width: 91px; }

.status { flex: none; display: flex; align-items: center; height: 17px; background: #f0f0f0; color: #666; font-size: 9px; padding: 0 6px; }
.ready { margin-right: auto; }
.view { width: 27px; height: 17px; }
.view.on { background: #c9c9c9; }
.step { width: 12px; height: 17px; }
.zoom { appearance: none; width: 84px; height: 11px; background: linear-gradient(#aaa, #aaa) center / 100% 1px no-repeat; }
.zoom::-webkit-slider-thumb { appearance: none; width: 4px; height: 10px; background: #555; }
.pct { width: 30px; text-align: right; }

.taskbar { flex: none; display: flex; height: 33px; background: #060b14; color: #fff; font-size: 10px; }
.sys { width: 40px; }
.app { width: 126px; margin: 0 0 0 8px; justify-content: flex-start; gap: 4px; padding: 0 0 0 6px; box-sizing: border-box; border-bottom: 2px solid #76b9ed; }
.app.firefox { margin-left: 6px; }
.app.current { width: 133px; margin-left: 5px; padding-left: 8px; background: #3c4047; }
.tray { display: flex; margin-left: auto; padding-right: 3px; }
.tray button { width: 20px; }
.tray .people { width: 40px; }
.tray .lang { width: 30px; }
.tray .clock { width: 56px; line-height: 15px; }
.tray .note { width: 41px; box-sizing: border-box; padding-right: 6px; position: relative; border-right: 1px solid #555; }
.note b { position: absolute; left: 17px; top: 15px; width: 13px; height: 13px; line-height: 12px; border-radius: 50%; background: #3a3d42; border: 1px solid #888; box-sizing: border-box; font-size: 9px; }
</style>
